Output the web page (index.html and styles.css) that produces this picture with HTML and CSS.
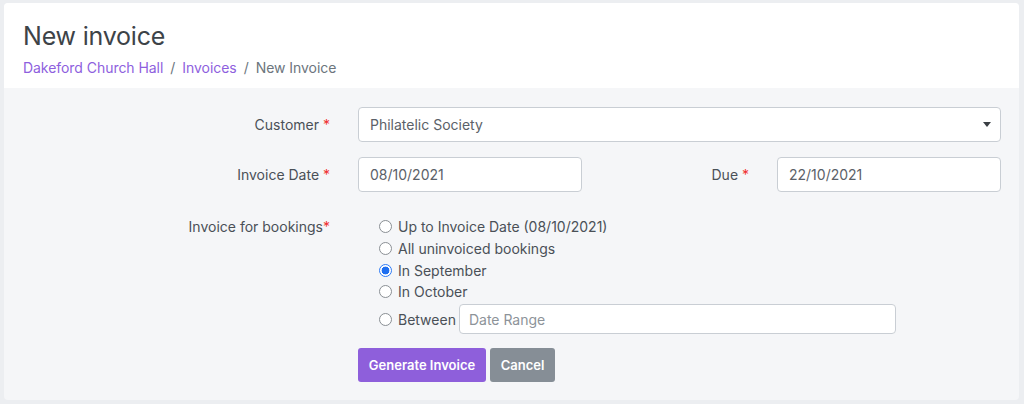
FILE: index.html
```html
<!DOCTYPE html>
<html>
<head>
<meta charset="utf-8">
<link rel="stylesheet" href="styles.css">
</head>
<body>
<div class="card">
  <div class="card-header">
    <h1 class="title">New invoice</h1>
    <nav class="crumbs">
      <a href="#">Dakeford Church Hall</a><span class="sep">/</span><a href="#">Invoices</a><span class="sep">/</span><span class="current">New Invoice</span>
    </nav>
  </div>
  <form class="card-body">
    <div class="row">
      <label class="lbl">Customer <span class="req">*</span></label>
      <div class="select">
        <span>Philatelic Society</span>
        <span class="caret"></span>
      </div>
    </div>
    <div class="row">
      <label class="lbl">Invoice Date <span class="req">*</span></label>
      <div class="dates">
        <div class="input">08/10/2021</div>
        <label class="lbl">Due <span class="req">*</span></label>
        <div class="input">22/10/2021</div>
      </div>
    </div>
    <div class="row radios-row">
      <label class="lbl">Invoice for bookings<span class="req">*</span></label>
      <div class="radios">
        <label class="radio"><span class="dot"></span>Up to Invoice Date (08/10/2021)</label>
        <label class="radio"><span class="dot"></span>All uninvoiced bookings</label>
        <label class="radio"><span class="dot on"></span>In September</label>
        <label class="radio"><span class="dot"></span>In October</label>
        <label class="radio between"><span class="dot"></span>Between <span class="input range">Date Range</span></label>
      </div>
    </div>
    <div class="row last">
      <span></span>
      <div class="buttons">
        <button type="button" class="btn primary">Generate Invoice</button>
        <button type="button" class="btn secondary">Cancel</button>
      </div>
    </div>
  </form>
</div>
</body>
</html>
```
FILE: styles.css
```css
html, body { margin: 0; padding: 0; }
body {
  background: #eceef1;
  font-family: "Inter", "Noto Sans", sans-serif;
  color: #4a5057;
  padding: 3px 5px 0 4px;
  height: 404px;
  box-sizing: border-box;
}
.card {
  background: #f5f6f8;
  border-radius: 4px;
  overflow: hidden;
}
.card-header {
  background: #fff;
  padding: 20px 19px 12px 19px;
  height: 53px;
}
.title {
  margin: 0;
  font-size: 25px;
  font-weight: 400;
  color: #3d4348;
  line-height: 26px;
  letter-spacing: -0.2px;
}
.crumbs {
  margin-top: 9px;
  font-size: 14px;
  line-height: 20px;
  letter-spacing: -0.05px;
}
.crumbs a { color: #8e5fde; text-decoration: none; }
.crumbs .sep { color: #6c757d; padding: 0 7px; }
.crumbs .current { color: #6c757d; }
.card-body {
  display: block;
  padding: 19px 18px 18px 0;
}
.row {
  display: grid;
  grid-template-columns: 326px 643px;
  column-gap: 28px;
  margin-bottom: 15px;
  font-size: 14px;
}
.row.last { margin-bottom: 0; }
.lbl {
  text-align: right;
  line-height: 35px;
  color: #4a5057;
}
.req { color: #f0302f; }
.select, .input {
  box-sizing: border-box;
  height: 35px;
  background: #fff;
  border: 1px solid #c9ced4;
  border-radius: 4px;
  padding: 0 11px;
  display: flex;
  align-items: center;
  color: #5b6168;
}
.select { justify-content: space-between; }
.caret {
  width: 0; height: 0;
  border-left: 4px solid transparent;
  border-right: 4px solid transparent;
  border-top: 5px solid #3a3f44;
  margin-right: -2px;
}
.dates {
  display: grid;
  grid-template-columns: 224px 1fr 224px;
  column-gap: 28px;
}
.radios-row { margin-bottom: 13px; }
.radios-row .lbl { line-height: 22px; padding-top: 9px; }
.radios {
  padding-left: 21px;
  padding-top: 9px;
}
.radio {
  display: flex;
  align-items: center;
  height: 21.7px;
  color: #4a5057;
}
.dot {
  box-sizing: border-box;
  width: 13px; height: 13px;
  border: 1px solid #8a8f94;
  border-radius: 50%;
  background: #fff;
  margin-right: 6px;
  flex: none;
}
.dot.on {
  border: 1px solid #2f7cf6;
  background: radial-gradient(circle, #1f6ff0 0 3.6px, #fff 4.2px);
}
.between { height: 31px; margin-top: 1px; }
.input.range {
  height: 30px;
  width: 437px;
  margin-left: 3px;
  color: #8d9399;
  padding: 0 9px;
}
.buttons { display: flex; gap: 4px; }
.btn {
  font-family: inherit;
  font-size: 13px;
  font-weight: 600;
  color: #fff;
  border: 0;
  border-radius: 3px;
  height: 34px;
  padding: 0;
  white-space: nowrap;
}
.primary { background: #8e5fdb; width: 128px; }
.secondary { background: #868e96; width: 65px; }
```
